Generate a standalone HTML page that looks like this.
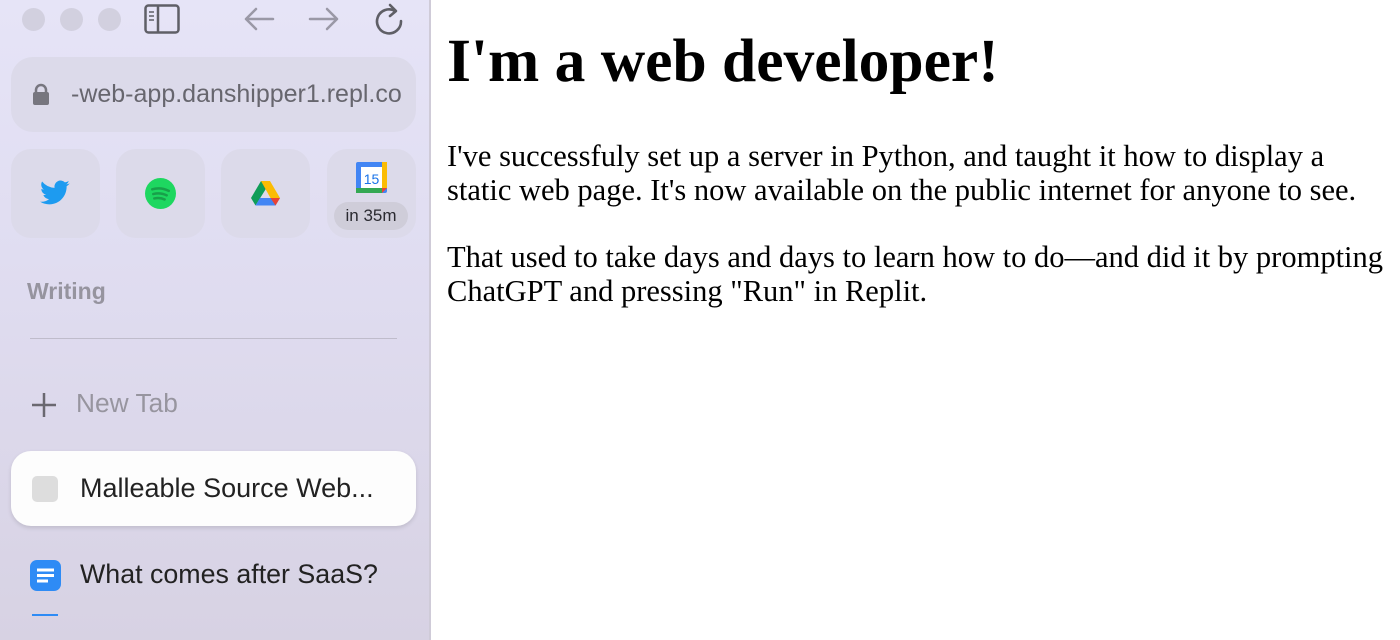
<!DOCTYPE html>
<html><head><meta charset="utf-8"><style>
*{margin:0;padding:0;box-sizing:border-box}
body{width:1400px;height:640px;overflow:hidden;background:#fff;position:relative;font-family:"Liberation Sans",sans-serif}
#sb{position:absolute;left:0;top:0;width:431px;height:640px;background:linear-gradient(180deg,#e6e4f7 0%,#e0ddf1 40%,#d7d2e3 100%);border-right:2px solid #cfcbd8}
.dot{position:absolute;top:8px;width:23px;height:23px;border-radius:50%;background:#d2d0df}
.abs{position:absolute;white-space:nowrap}
.url{left:11px;top:57px;width:405px;height:75px;border-radius:22px;background:#dcdaea}
.tile{top:149px;width:89px;height:89px;border-radius:20px;background:#dcdaea}
#main{position:absolute;left:447px;top:0;font-family:"Liberation Serif",serif;color:#000}
h1{font-size:61.5px;font-weight:bold;position:absolute;top:26px;left:0;white-space:nowrap}
p{font-size:30.5px;line-height:34px;position:absolute;left:0;white-space:nowrap}
</style></head><body>
<div id="sb">
<div class="dot" style="left:22px"></div><div class="dot" style="left:60px"></div><div class="dot" style="left:98px"></div>
<svg class="abs" style="left:144px;top:4px" width="36" height="30" viewBox="0 0 36 30"><rect x="1.5" y="1.5" width="33" height="27" rx="3" fill="none" stroke="#5f5f66" stroke-width="2.5"/><line x1="14" y1="2" x2="14" y2="28" stroke="#5f5f66" stroke-width="2.5"/><path d="M5 8h5M5 12h5M5 16h5" stroke="#5f5f66" stroke-width="1.5"/></svg>
<svg class="abs" style="left:243px;top:6px" width="32" height="26" viewBox="0 0 32 26"><path d="M30 13H3M13 3L3 13l10 10" fill="none" stroke="#9a98a6" stroke-width="2.5" stroke-linecap="round" stroke-linejoin="round"/></svg>
<svg class="abs" style="left:308px;top:6px" width="32" height="26" viewBox="0 0 32 26"><path d="M2 13h27M19 3l10 10-10 10" fill="none" stroke="#9a98a6" stroke-width="2.5" stroke-linecap="round" stroke-linejoin="round"/></svg>
<svg class="abs" style="left:373px;top:2px" width="32" height="34" viewBox="0 0 32 34"><path d="M22 9A12 12 0 1 0 28 19" fill="none" stroke="#5f5f66" stroke-width="2.6" stroke-linecap="round"/><path d="M17 3l6 6-6 5" fill="none" stroke="#5f5f66" stroke-width="2.6" stroke-linecap="round" stroke-linejoin="round"/></svg>
<div class="abs url"></div>
<svg class="abs" style="left:31px;top:82px" width="20" height="24" viewBox="0 0 20 24"><path d="M5 11V8a5 5 0 0 1 10 0v3" fill="none" stroke="#77767f" stroke-width="2.5"/><rect x="2" y="10" width="16" height="13" rx="2" fill="#77767f"/></svg>
<div class="abs" style="left:71px;top:80px;font-size:25px;color:#67666e">-web-app.danshipper1.repl.co</div>
<div class="abs tile" style="left:11px"></div>
<div class="abs tile" style="left:116px"></div>
<div class="abs tile" style="left:221px"></div>
<div class="abs tile" style="left:327px"></div>
<svg class="abs" style="left:40px;top:179px" width="31" height="28" viewBox="0 0 24 20"><path d="M23 2.5a9 9 0 0 1-2.7.8 4.7 4.7 0 0 0 2-2.6 9 9 0 0 1-3 1.1A4.7 4.7 0 0 0 11.3 6 13.3 13.3 0 0 1 1.6 1.1a4.7 4.7 0 0 0 1.5 6.3 4.6 4.6 0 0 1-2.1-.6 4.7 4.7 0 0 0 3.7 4.6 4.7 4.7 0 0 1-2.1.1 4.7 4.7 0 0 0 4.4 3.2A9.4 9.4 0 0 1 0 16.7 13.3 13.3 0 0 0 7.2 18.8c8.6 0 13.4-7.2 13.4-13.4v-.6A9.5 9.5 0 0 0 23 2.5z" fill="#1d9bf0"/></svg>
<svg class="abs" style="left:145px;top:178px" width="31" height="31" viewBox="0 0 30 30"><circle cx="15" cy="15" r="15" fill="#1ed760"/><path d="M7 11c5-1.5 11-1 16 1.5M8 15.5c4-1 9-.7 13 1.3M9 19.8c3.5-.8 7-.5 10 1" fill="none" stroke="#18a04a" stroke-width="2.4" stroke-linecap="round"/></svg>
<svg class="abs" style="left:251px;top:180px" width="29" height="26" viewBox="0 0 29 26"><path d="M10 1h9l-5 8.5z" fill="#188038"/><path d="M10 1L0 18l4.5 7.5L14.5 9.5z" fill="#0f9d58"/><path d="M19 1l10 17h-9.5L10 1z" fill="#fbbc04"/><path d="M4.5 25.5h20L29 18H9z" fill="#4285f4"/><path d="M24.5 25.5L29 18h-9.5z" fill="#ea4335"/></svg>
<svg class="abs" style="left:356px;top:162px" width="31" height="32" viewBox="0 0 31 32"><rect x="0" y="0" width="31" height="31" rx="2" fill="#4285f4"/><rect x="5" y="5" width="21" height="21" fill="#fff"/><rect x="26" y="0" width="5" height="26" fill="#fbbc04"/><rect x="0" y="26" width="26" height="5" fill="#34a853"/><path d="M26 26h5l-5 5z" fill="#ea4335"/><text x="15.5" y="22" font-size="14" text-anchor="middle" fill="#1a73e8" font-family="Liberation Sans">15</text></svg>
<div class="abs" style="left:334px;top:202px;width:74px;height:28px;border-radius:14px;background:#cfcdd9;font-size:17px;color:#2a2a30;text-align:center;line-height:28px">in 35m</div>
<div class="abs" style="left:27px;top:278px;font-size:23px;font-weight:bold;color:#96949f">Writing</div>
<div class="abs" style="left:30px;top:338px;width:367px;height:1px;background:#bfbccb"></div>
<svg class="abs" style="left:31px;top:392px" width="26" height="26"><path d="M13 1v24M1 13h24" stroke="#6a6870" stroke-width="2.5"/></svg>
<div class="abs" style="left:76px;top:388px;font-size:26.3px;color:#97959f">New Tab</div>
<div class="abs" style="left:11px;top:451px;width:405px;height:75px;border-radius:20px;background:#fdfdfd;box-shadow:0 2px 4px rgba(0,0,0,.12)"></div>
<div class="abs" style="left:32px;top:476px;width:26px;height:26px;border-radius:5px;background:#dddddd"></div>
<div class="abs" style="left:80px;top:473px;font-size:27px;color:#222">Malleable Source Web...</div>
<svg class="abs" style="left:30px;top:560px" width="31" height="31" viewBox="0 0 31 31"><rect width="31" height="31" rx="7" fill="#2e8bf5"/><path d="M7 10h17M7 15.5h17M7 21h11" stroke="#fff" stroke-width="3"/></svg>
<div class="abs" style="left:80px;top:559px;font-size:26.8px;color:#222">What comes after SaaS?</div>
<div class="abs" style="left:32px;top:614px;width:26px;height:2px;background:#2e8bf5"></div>
</div>
<div id="main">
<h1>I'm a web developer!</h1>
<p style="top:139px">I've successfuly set up a server in Python, and taught it how to display a<br>static web page. It's now available on the public internet for anyone to see.</p>
<p style="top:240px">That used to take days and days to learn how to do—and did it by prompting<br>ChatGPT and pressing "Run" in Replit.</p>
</div>
</body></html>
